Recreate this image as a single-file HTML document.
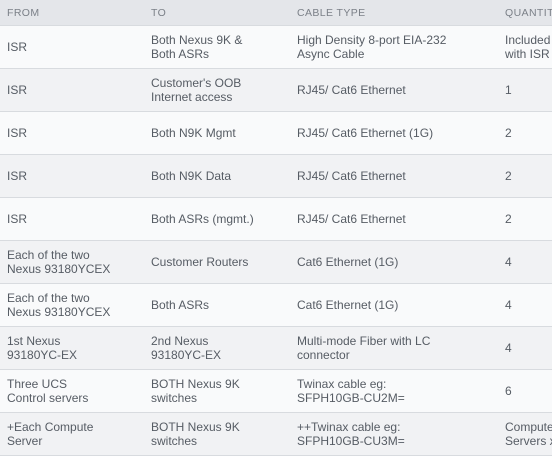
<!DOCTYPE html>
<html><head><meta charset="utf-8"><style>
*{margin:0;padding:0;box-sizing:border-box}
body{width:552px;height:448px;overflow:hidden;background:#f9fafb;font-family:"Liberation Sans",sans-serif;color:#565c64;font-size:12px}
.r{position:absolute;left:0;width:552px;border-bottom:1px solid #d8dbdf}
.c{position:absolute;top:0;height:100%;display:flex;align-items:center;line-height:14px;white-space:nowrap}
.h{background:#e4e6ea;color:#7b8088;font-size:10.5px;letter-spacing:.4px}
.o{background:#f9fafb}.e{background:#f1f2f4}
</style></head><body>
<div class="r h" style="top:0;height:26px"><div class="c" style="left:7px">FROM</div><div class="c" style="left:151px">TO</div><div class="c" style="left:297px">CABLE TYPE</div><div class="c" style="left:505px">QUANTITY</div></div>
<div class="r o" style="top:26px;height:43px"><div class="c" style="left:7px">ISR</div><div class="c" style="left:151px">Both Nexus 9K &amp;<br>Both ASRs</div><div class="c" style="left:297px">High Density 8-port EIA-232<br>Async Cable</div><div class="c" style="left:505px">Included<br>with ISR</div></div>
<div class="r e" style="top:69px;height:43px"><div class="c" style="left:7px">ISR</div><div class="c" style="left:151px">Customer's OOB<br>Internet access</div><div class="c" style="left:297px">RJ45/ Cat6 Ethernet</div><div class="c" style="left:505px">1</div></div>
<div class="r o" style="top:112px;height:43px"><div class="c" style="left:7px">ISR</div><div class="c" style="left:151px">Both N9K Mgmt</div><div class="c" style="left:297px">RJ45/ Cat6 Ethernet (1G)</div><div class="c" style="left:505px">2</div></div>
<div class="r e" style="top:155px;height:43px"><div class="c" style="left:7px">ISR</div><div class="c" style="left:151px">Both N9K Data</div><div class="c" style="left:297px">RJ45/ Cat6 Ethernet</div><div class="c" style="left:505px">2</div></div>
<div class="r o" style="top:198px;height:43px"><div class="c" style="left:7px">ISR</div><div class="c" style="left:151px">Both ASRs (mgmt.)</div><div class="c" style="left:297px">RJ45/ Cat6 Ethernet</div><div class="c" style="left:505px">2</div></div>
<div class="r e" style="top:241px;height:43px"><div class="c" style="left:7px">Each of the two<br>Nexus 93180YCEX</div><div class="c" style="left:151px">Customer Routers</div><div class="c" style="left:297px">Cat6 Ethernet (1G)</div><div class="c" style="left:505px">4</div></div>
<div class="r o" style="top:284px;height:43px"><div class="c" style="left:7px">Each of the two<br>Nexus 93180YCEX</div><div class="c" style="left:151px">Both ASRs</div><div class="c" style="left:297px">Cat6 Ethernet (1G)</div><div class="c" style="left:505px">4</div></div>
<div class="r e" style="top:327px;height:43px"><div class="c" style="left:7px">1st Nexus<br>93180YC-EX</div><div class="c" style="left:151px">2nd Nexus<br>93180YC-EX</div><div class="c" style="left:297px">Multi-mode Fiber with LC<br>connector</div><div class="c" style="left:505px">4</div></div>
<div class="r o" style="top:370px;height:43px"><div class="c" style="left:7px">Three UCS<br>Control servers</div><div class="c" style="left:151px">BOTH Nexus 9K<br>switches</div><div class="c" style="left:297px">Twinax cable eg:<br>SFPH10GB-CU2M=</div><div class="c" style="left:505px">6</div></div>
<div class="r e" style="top:413px;height:43px"><div class="c" style="left:7px">+Each Compute<br>Server</div><div class="c" style="left:151px">BOTH Nexus 9K<br>switches</div><div class="c" style="left:297px">++Twinax cable eg:<br>SFPH10GB-CU3M=</div><div class="c" style="left:505px">Compute<br>Servers x</div></div>
</body></html>
